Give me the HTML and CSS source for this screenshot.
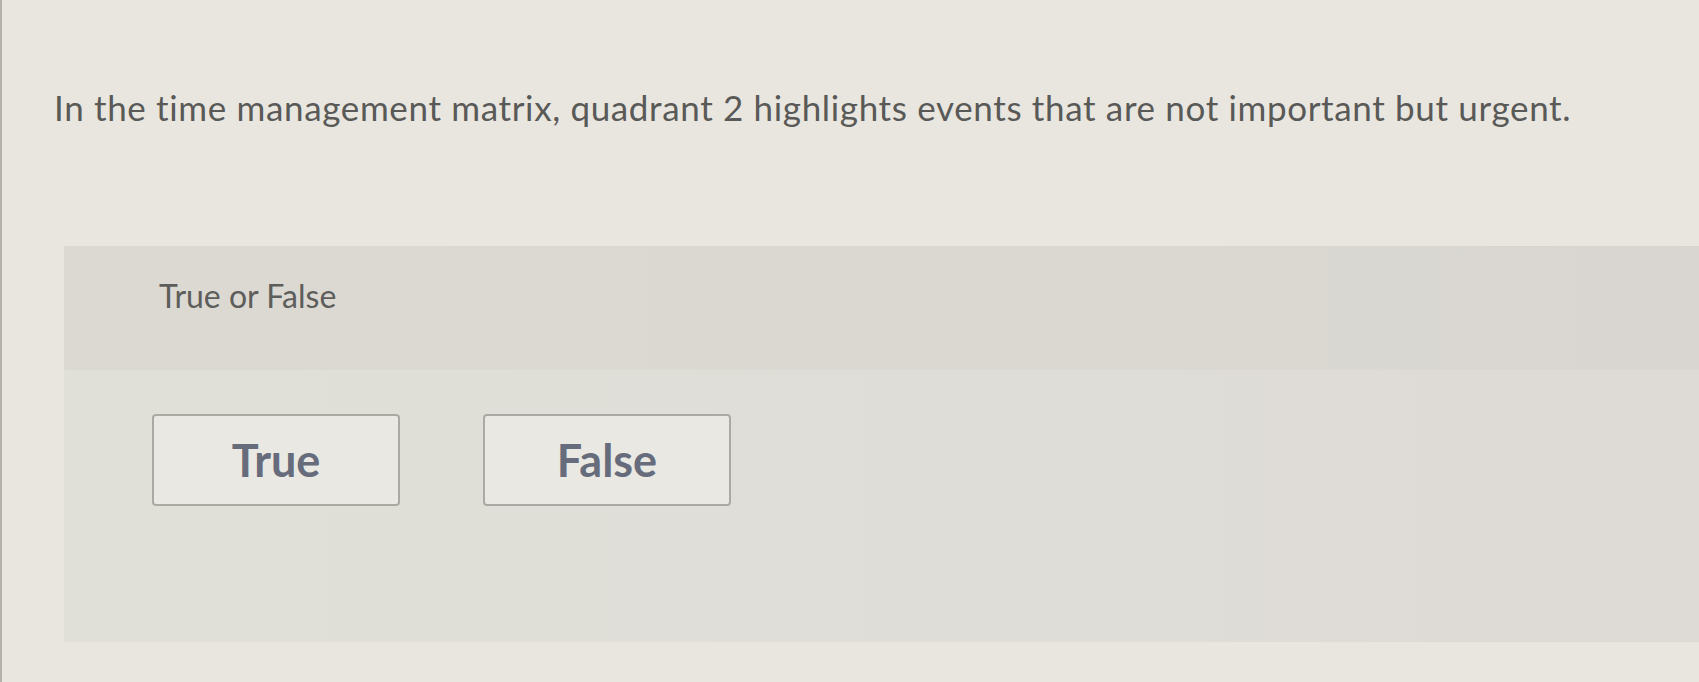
FILE: index.html
```html
<!DOCTYPE html>
<html lang="en">
<head>
    <meta charset="UTF-8">
    <meta name="viewport" content="width=device-width, initial-scale=1.0">
    <title>Question</title>
    <link rel="stylesheet" href="styles.css">
</head>
<body>
    <div class="page">
        <p class="question">In the time management matrix, quadrant 2 highlights events that are not important but urgent.</p>

        <div class="answer-card">
            <div class="card-header">
                <span class="prompt">True or False</span>
            </div>
            <div class="card-body">
                <button type="button" class="choice-btn">True</button>
                <button type="button" class="choice-btn">False</button>
            </div>
        </div>
    </div>
</body>
</html>
```

FILE: styles.css
```css
* {
    margin: 0;
    padding: 0;
    box-sizing: border-box;
}

body {
    font-family: Lato, 'Open Sans', sans-serif;
    background: #e8e6df;
    min-height: 100vh;
    overflow: hidden;
}

.page {
    min-height: 682px;
    border-left: 2px solid #b4b2ac;
    padding: 87px 0 0 52px;
}

.question {
    color: #595957;
    font-size: 35px;
    line-height: 40px;
    letter-spacing: 0.65px;
}

.answer-card {
    margin: 119px 0 0 10px;
    height: 396px;
    background: linear-gradient(90deg, #e0dfd8 0%, #dfddd7 65%, #dedad6 100%);
    display: flex;
    flex-direction: column;
}

.card-header {
    height: 124px;
    background: linear-gradient(90deg, #dbd9d2 0%, #dad8d1 70%, #d9d6d2 100%);
    padding: 30px 0 0 95px;
}

.prompt {
    color: #5d5d5b;
    font-size: 32px;
}

.card-body {
    display: flex;
    gap: 83px;
    padding: 44px 0 0 88px;
}

.choice-btn {
    width: 248px;
    height: 92px;
    background: #e9e8e2;
    border: 2px solid #aaa9a4;
    border-radius: 4px;
    color: #666c7b;
    font-family: inherit;
    font-size: 45px;
    font-weight: 700;
    cursor: pointer;
}
```
